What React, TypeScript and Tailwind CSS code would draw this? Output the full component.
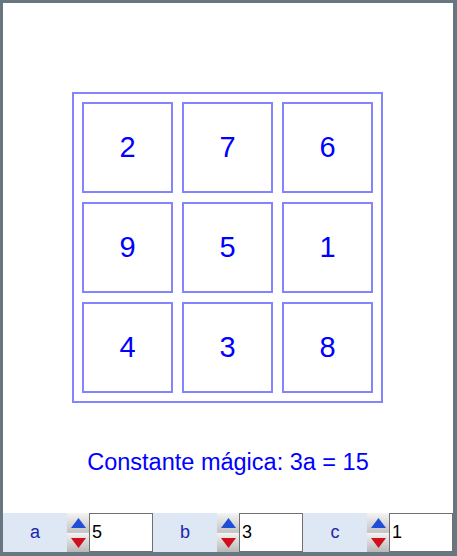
import React from "react";

const square: number[][] = [
  [2, 7, 6],
  [9, 5, 1],
  [4, 3, 8],
];

const Spinner: React.FC = () => {
  return (
    <div className="flex h-full w-[22px] flex-col">
      <div className="flex flex-1 items-center justify-center border-b border-[#c8c8c8] bg-gradient-to-b from-[#f4f4f4] to-[#c4c4c4]">
        <svg width="15" height="10" viewBox="0 0 15 10">
          <polygon points="7.5,0 15,10 0,10" fill="#1f4fd8" />
        </svg>
      </div>
      <div className="flex flex-1 items-center justify-center bg-gradient-to-b from-[#f4f4f4] to-[#b8b8b8]">
        <svg width="15" height="10" viewBox="0 0 15 10">
          <polygon points="0,0 15,0 7.5,10" fill="#d0101c" />
        </svg>
      </div>
    </div>
  );
};

const Slider: React.FC<{ name: string; value: number }> = ({ name, value }) => {
  return (
    <div className="flex h-full w-[150px]">
      <div className="flex w-[64px] items-center justify-center bg-[#dde8f4] text-[18px] text-[#2222b0]">
        {name}
      </div>
      <Spinner />
      <div className="flex w-[64px] items-center border border-[#707070] bg-white pl-[2px] text-[18px] text-black">
        {value}
      </div>
    </div>
  );
};

export default function App() {
  return (
    <div
      className="h-[556px] w-[457px] bg-[#66777f] pb-[4px] pl-[3px] pr-[4px] pt-[3px]"
      style={{ fontFamily: '"Liberation Sans", Arial, sans-serif' }}
    >
      <div className="flex h-full w-full flex-col bg-white">
        {/* drawing area */}
        <div className="flex flex-1 flex-col items-center pt-[89px]">
          <div className="ml-[-1px] grid grid-cols-3 gap-[9px] border-2 border-[#8484ff] p-[8px]">
            {square.flat().map((n, i) => (
              <div
                key={i}
                className="flex h-[91px] w-[91px] items-center justify-center border-2 border-[#8484ff] text-[29px] text-[#0000ff]"
              >
                {n}
              </div>
            ))}
          </div>
          <p className="mt-[45px] text-[23.5px] leading-[28px] text-[#0000ff]">
            Constante mágica: 3a = 15
          </p>
        </div>

        {/* slider bar */}
        <div className="flex h-[39px] bg-[#dde8f4]">
          <Slider name="a" value={5} />
          <Slider name="b" value={3} />
          <Slider name="c" value={1} />
        </div>
      </div>
    </div>
  );
}
